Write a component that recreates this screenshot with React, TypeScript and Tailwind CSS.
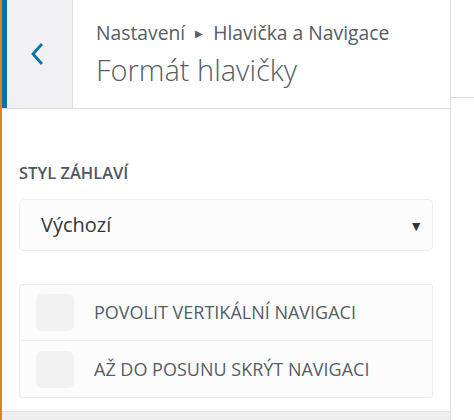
import React from "react";

function BackChevron() {
  return (
    <svg width="14" height="22" viewBox="0 0 14 22" fill="none">
      <path d="M11 2 L3 11 L11 20" stroke="#0073aa" strokeWidth="2.8" strokeLinecap="square" />
    </svg>
  );
}

function Toggle({ label }: { label: string }) {
  return (
    <div className="flex h-[56px] items-center border-b border-[#eeeeee] last:border-b-0">
      <span className="ml-[16px] h-[37px] w-[38px] rounded-[6px] bg-[#f2f2f2]"></span>
      <span className="ml-[20px] text-[18px] uppercase text-[#555d66]">{label}</span>
    </div>
  );
}

export default function App() {
  return (
    <div className="flex h-[420px] w-[474px] overflow-hidden bg-white font-['Open_Sans',sans-serif]">
      {/* orange edge */}
      <div className="w-[2px] shrink-0 bg-[#e67e22]"></div>

      {/* panel */}
      <div className="flex w-[449px] shrink-0 flex-col border-r border-[#dddddd]">
        <div className="flex h-[109px] shrink-0 border-b border-[#dddddd]">
          <button className="flex w-[71px] shrink-0 items-center justify-center border-l-[5px] border-r border-[#0073aa] border-r-[#dddddd] bg-[#f1f1f3] pr-[6px]">
            <BackChevron />
          </button>
          <div className="flex flex-col pl-[23px] pt-[16px] text-[#555d66]">
            <div className="flex items-center text-[19.3px] leading-[34px]">
              <span>Nastavení</span>
              <span className="mx-[10px] text-[10px]">▶</span>
              <span>Hlavička a Navigace</span>
            </div>
            <div className="text-[29px] font-light leading-[40px]">Formát hlavičky</div>
          </div>
        </div>

        <div className="flex flex-1 flex-col px-[17px] pt-[52px]">
          <div className="text-[16.5px] font-semibold uppercase leading-[24px] text-[#50575e]">Styl záhlaví</div>
          <div className="mt-[14px] flex h-[52px] items-center justify-between rounded-[5px] border border-[#eeeeee] bg-[#fcfcfc] pl-[21px] pr-[9px]">
            <span className="text-[20px] text-[#32373c]">Výchozí</span>
            <span className="text-[14px] text-[#333333]">▼</span>
          </div>

          <div className="mt-[33px] rounded-[3px] border border-[#eeeeee] bg-[#fcfcfc]">
            <Toggle label="Povolit vertikální navigaci" />
            <Toggle label="Až do posunu skrýt navigaci" />
          </div>

          <div className="flex-1"></div>
        </div>
        <div className="h-[9px] shrink-0 border-t border-dotted border-[#dddddd] bg-[#eeeeee]"></div>
      </div>

      {/* right area */}
      <div className="flex-1">
        <div className="h-[98px] border-b border-[#dddddd]"></div>
      </div>
    </div>
  );
}
